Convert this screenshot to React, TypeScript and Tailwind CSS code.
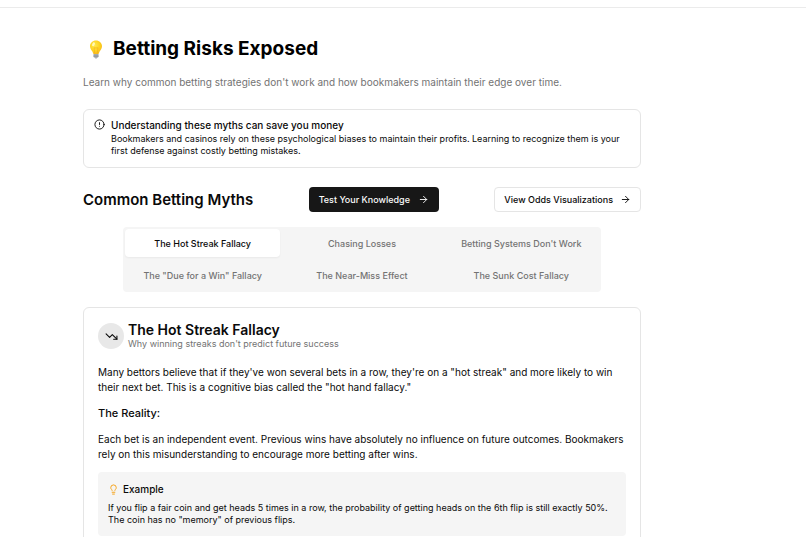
import { useState } from 'react'
import { ArrowRight, CircleAlert, Lightbulb, TrendingDown } from 'lucide-react'

const myths = [
  'The Hot Streak Fallacy',
  'Chasing Losses',
  "Betting Systems Don't Work",
  'The "Due for a Win" Fallacy',
  'The Near-Miss Effect',
  'The Sunk Cost Fallacy',
]

function BulbEmoji() {
  return (
    <svg viewBox="0 0 24 36" className="w-3 h-[19px] shrink-0" aria-hidden="true">
      <defs>
        <radialGradient id="glass" cx="0.4" cy="0.35" r="0.7">
          <stop offset="0" stopColor="#ffe94d" />
          <stop offset="0.6" stopColor="#fdd21f" />
          <stop offset="1" stopColor="#f5b61c" />
        </radialGradient>
      </defs>
      <path d="M12 0C5.200 0 0 5 0 11.500c0 4.800 3 7.500 4.800 10.700C6.200 24.700 6.200 27 7.500 27h9c1.300 0 1.300-2.300 2.700-4.800C21 19 24 16.300 24 11.500 24 5 18.800 0 12 0z" fill="url(#glass)" />
      <path d="M9.500 26 8 14l2 1.500 2-1.500 2 1.500 2-1.500-1.500 12" fill="none" stroke="#f0a51a" strokeWidth="1" />
      <ellipse cx="7" cy="7.500" rx="2.500" ry="4" fill="#fff8b8" transform="rotate(30 7 7.500)" />
      <path d="M7 27h10v5.500c0 1-1 1.500-2 1.500l-1.500 2h-3L9 34c-1 0-2-.5-2-1.500z" fill="#a9b0b5" />
      <path d="M7 29.500h10M7 32h10" stroke="#7f878c" strokeWidth="1" />
    </svg>
  )
}

export default function App() {
  const [active, setActive] = useState(myths[0])

  return (
    <div className="h-screen overflow-hidden bg-white font-['Inter',sans-serif] text-[10px] leading-[15px] text-[#0a0a0a]">
      <header className="h-2 border-b border-[#ebebeb]" />

      <main className="pl-[83px] pr-[165px] pt-[29px]">
        {/* Title */}
        <div className="flex items-center gap-[11px] pl-[7px]">
          <BulbEmoji />
          <h1 className="text-[19px] leading-6 font-bold text-black">Betting Risks Exposed</h1>
        </div>
        <p className="mt-[14px] text-[#737373]">
          Learn why common betting strategies don't work and how bookmakers maintain their edge over time.
        </p>

        {/* Notice */}
        <div role="alert" className="mt-[19px] flex gap-[6px] rounded-md border border-[#e5e5e5] px-[10px] pt-2 pb-[10px]">
          <CircleAlert size={11} className="mt-[1px] shrink-0" />
          <div>
            <h2 className="font-medium leading-[15px]">Understanding these myths can save you money</h2>
            <p className="text-[9px] leading-[12px]">
              Bookmakers and casinos rely on these psychological biases to maintain their profits. Learning to recognize them is your first defense against costly betting mistakes.
            </p>
          </div>
        </div>

        {/* Section heading and links */}
        <div className="mt-[19px] flex items-center justify-between">
          <h2 className="text-[15px] leading-5 font-semibold">Common Betting Myths</h2>
          <button className="flex h-[25px] items-center gap-2 rounded bg-[#171717] px-[10px] text-[9px] font-medium text-[#fafafa]">
            Test Your Knowledge
            <ArrowRight size={11} />
          </button>
          <button className="flex h-[25px] items-center gap-[7px] rounded border border-[#e5e5e5] px-[9px] text-[9px] font-medium">
            View Odds Visualizations
            <ArrowRight size={11} />
          </button>
        </div>

        {/* Tabs */}
        <div role="tablist" className="mx-10 mt-[15px] grid grid-cols-3 gap-1 rounded bg-[#f5f5f5] p-[2px] pb-[3px]">
          {myths.map(myth => (
            <button
              key={myth}
              role="tab"
              aria-selected={myth === active}
              onClick={() => setActive(myth)}
              className={
                myth === active
                  ? 'h-7 rounded-sm bg-white text-[9px] font-medium whitespace-nowrap shadow-xs'
                  : 'h-7 rounded-sm text-[9px] font-medium whitespace-nowrap text-[#737373]'
              }
            >
              {myth}
            </button>
          ))}
        </div>

        {/* Myth card */}
        <section className="mt-[15px] rounded-md border border-[#e5e5e5] px-[14px] pt-[14px] pb-4">
          <div className="flex items-center gap-1">
            <div className="flex size-[26px] shrink-0 items-center justify-center rounded-full bg-[#e8e8e8]">
              <TrendingDown size={13} />
            </div>
            <div>
              <h2 className="text-[14px] leading-4 font-semibold">The Hot Streak Fallacy</h2>
              <p className="text-[9px] leading-[12px] text-[#737373]">Why winning streaks don't predict future success</p>
            </div>
          </div>

          <p className="mt-[15px]">
            Many bettors believe that if they've won several bets in a row, they're on a "hot streak" and more likely to win their next bet. This is a cognitive bias called the "hot hand fallacy."
          </p>
          <h3 className="mt-[10px] text-[11px] leading-4 font-medium">The Reality:</h3>
          <p className="mt-[11px]">
            Each bet is an independent event. Previous wins have absolutely no influence on future outcomes. Bookmakers rely on this misunderstanding to encourage more betting after wins.
          </p>

          <div className="mt-[10px] rounded bg-[#f5f5f5] p-[10px]">
            <div className="flex items-center gap-1">
              <Lightbulb size={11} className="text-[#f59e0b]" />
              <h4 className="font-medium">Example</h4>
            </div>
            <p className="mt-[5px] text-[9px] leading-[12px]">
              If you flip a fair coin and get heads 5 times in a row, the probability of getting heads on the 6th flip is still exactly 50%. The coin has no "memory" of previous flips.
            </p>
          </div>
        </section>
      </main>
    </div>
  )
}
